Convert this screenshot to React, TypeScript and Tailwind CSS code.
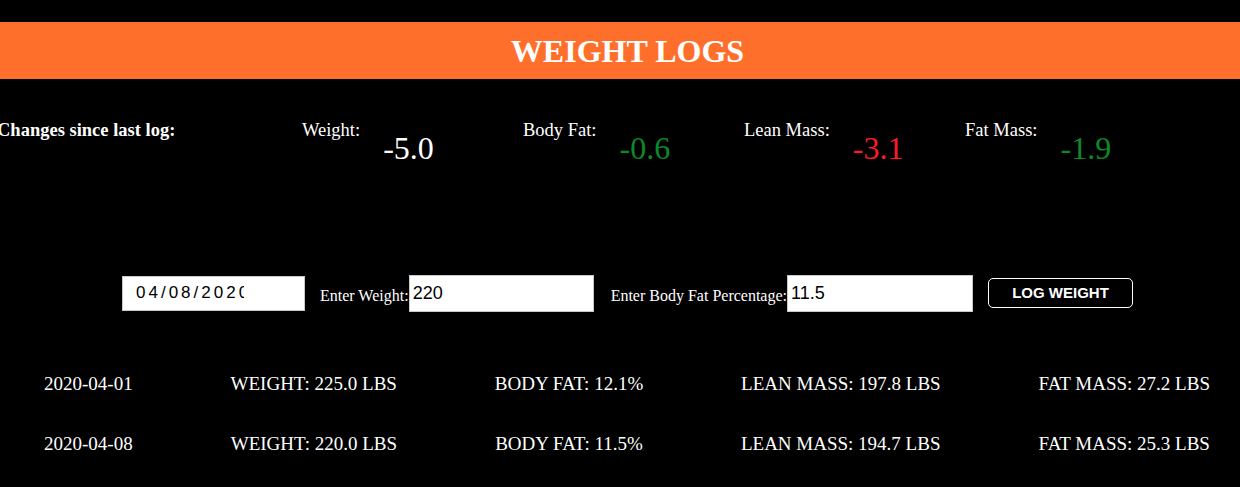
import React from "react"

const serif = { fontFamily: '"Liberation Serif", "Times New Roman", serif' }
const sans = { fontFamily: '"Liberation Sans", Arial, sans-serif' }

const changes = [
  { label: "Weight:", value: "-5.0", color: "text-white" },
  { label: "Body Fat:", value: "-0.6", color: "text-[#0a8a2a]" },
  { label: "Lean Mass:", value: "-3.1", color: "text-[#fb1a2a]" },
  { label: "Fat Mass:", value: "-1.9", color: "text-[#0a8a2a]" },
]

const logs = [
  { date: "2020-04-01", weight: "225.0", bf: "12.1", lean: "197.8", fat: "27.2" },
  { date: "2020-04-08", weight: "220.0", bf: "11.5", lean: "194.7", fat: "25.3" },
]

export default function App() {
  return (
    <div className="min-h-[487px] w-[1240px] bg-black text-white overflow-hidden" style={serif}>
      {/* Header */}
      <div className="pt-[22px]">
        <div className="h-[57px] bg-[#ff6f2c] flex items-center justify-center pl-[15px]">
          <h1 className="text-[32px] font-bold leading-none">WEIGHT LOGS</h1>
        </div>
      </div>

      {/* Changes since last log */}
      <div className="flex items-start pt-[40px] h-[194px]">
        <div className="w-[302px] shrink-0">
          <span className="block -ml-[3px] text-[18.5px] font-bold leading-[22px] whitespace-nowrap">
            Changes since last log:
          </span>
        </div>
        {changes.map((c) => (
          <div key={c.label} className="w-[221px] shrink-0 flex items-start">
            <span className="text-[18.5px] leading-[22px] whitespace-nowrap">{c.label}</span>
            <span className={`ml-[23px] mt-[11px] text-[32px] leading-[36px] ${c.color}`}>{c.value}</span>
          </div>
        ))}
      </div>

      {/* Form */}
      <div className="flex items-center ml-[122px] h-[40px]">
        <div className="w-[183px] h-[35px] bg-white border border-[#c8c8c8] flex items-center pl-[13px]">
          <div className="w-[108px] overflow-hidden whitespace-nowrap">
            <span className="text-[17px] text-black tracking-[3px]" style={sans}>
              04/08/2020
            </span>
          </div>
        </div>
        <label className="ml-[15px] text-[16px] whitespace-nowrap mt-[5px]">Enter Weight:</label>
        <div
          className="w-[185px] h-[37px] bg-white border border-[#c8c8c8] flex items-center pl-[3px] text-black text-[18px]"
          style={sans}
        >
          220
        </div>
        <label className="ml-[17px] text-[16px] whitespace-nowrap mt-[5px]">Enter Body Fat Percentage:</label>
        <div
          className="w-[186px] h-[37px] bg-white border border-[#c8c8c8] flex items-center pl-[3px] text-black text-[18px]"
          style={sans}
        >
          11.5
        </div>
        <button
          className="ml-[15px] w-[145px] h-[30px] border border-white rounded-[5px] text-[15px] font-bold text-white"
          style={sans}
        >
          LOG WEIGHT
        </button>
      </div>

      {/* Log entries */}
      <div className="pt-[60px] pl-[44px] pr-[30px]">
        {logs.map((l) => (
          <div key={l.date} className="flex justify-between h-[60px] text-[19px] leading-[22px] whitespace-nowrap">
            <span>{l.date}</span>
            <span>WEIGHT: {l.weight} LBS</span>
            <span>BODY FAT: {l.bf}%</span>
            <span>LEAN MASS: {l.lean} LBS</span>
            <span>FAT MASS: {l.fat} LBS</span>
          </div>
        ))}
      </div>
    </div>
  )
}
